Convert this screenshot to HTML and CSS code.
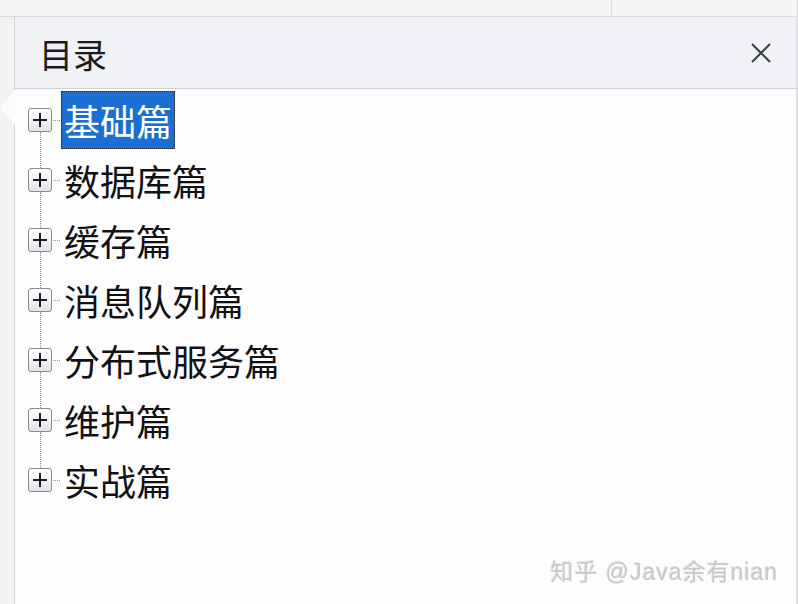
FILE: index.html
```html
<!DOCTYPE html>
<html lang="zh-CN">
<head>
<meta charset="UTF-8" />
<meta name="viewport" content="width=device-width, initial-scale=1" />
<title>目录</title>
<link rel="stylesheet" href="styles.css">
</head>
<body>

<div class="top-strip">
  <div class="top-cell"></div>
  <div class="top-cell small"></div>
</div>

<div class="main">
  <div class="gutter"></div>

  <div class="panel">
    <span class="notch"></span>

    <div class="panel-header">
      <span class="panel-title">目录</span>
      <svg class="close" width="22" height="22" viewBox="0 0 22 22">
        <path d="M2 2 L20 20 M20 2 L2 20" stroke="#3c3f45" stroke-width="2" fill="none" />
      </svg>
    </div>

    <ul class="tree">
      <li class="node"><span class="toggle"></span><span class="label selected">基础篇</span></li>
      <li class="node"><span class="toggle"></span><span class="label">数据库篇</span></li>
      <li class="node"><span class="toggle"></span><span class="label">缓存篇</span></li>
      <li class="node"><span class="toggle"></span><span class="label">消息队列篇</span></li>
      <li class="node"><span class="toggle"></span><span class="label">分布式服务篇</span></li>
      <li class="node"><span class="toggle"></span><span class="label">维护篇</span></li>
      <li class="node"><span class="toggle"></span><span class="label">实战篇</span></li>
    </ul>

    <div class="watermark">知乎 @Java余有nian</div>
  </div>
</div>

</body>
</html>
```

FILE: styles.css
```css
body {
  margin: 0;
  font-family: "Noto Sans CJK SC", "Noto Sans", sans-serif;
  background: #f3f4f6;
  width: 798px;
  height: 604px;
  overflow: hidden;
}
.top-strip {
  display: flex;
  height: 16px;
  border-bottom: 1px solid #d9dadd;
  background: #f4f5f7;
}
.top-cell {
  width: 611px;
  border-right: 1px solid #dcdde0;
}
.top-cell.small {
  flex: 1;
  border-right: 1px solid #d6d7da;
}
.main {
  display: flex;
  height: 587px;
}
.gutter {
  width: 14px;
  background: #f1f2f4;
  border-right: 1px solid #d3d4d7;
}
.panel {
  position: relative;
  flex: 1;
  background: #fdfdfe;
  border-right: 2px solid #dfe0e3;
}
.notch {
  position: absolute;
  left: -15px;
  top: 72px;
  width: 0;
  height: 0;
  border-top: 18px solid transparent;
  border-bottom: 18px solid transparent;
  border-right: 15px solid #fbfbfc;
}
.panel-header {
  display: flex;
  align-items: center;
  justify-content: space-between;
  height: 71px;
  padding: 0 24px 0 24px;
  background: #f0f2f5;
  border-bottom: 1px solid #cfd1d5;
}
.panel-title {
  font-size: 34px;
  color: #1b1b1d;
  line-height: 1;
  margin-top: 3px;
}
.close {
  display: block;
}
.tree {
  list-style: none;
  margin: 0;
  padding: 1px 0 0 13px;
}
.node {
  position: relative;
  display: flex;
  align-items: center;
  height: 60px;
}
.node::before {
  content: "";
  position: absolute;
  left: 25px;
  top: 30px;
  width: 7px;
  border-top: 1px dotted #8c9098;
}
.node::after {
  content: "";
  position: absolute;
  left: 12px;
  top: 42px;
  height: 36px;
  border-left: 1px dotted #8c9098;
}
.node:last-child::after {
  display: none;
}
.toggle {
  position: relative;
  width: 22px;
  height: 22px;
  border: 1px solid #878b93;
  border-radius: 3px;
  background: linear-gradient(#ffffff, #e3e5ea);
  margin-right: 9px;
  flex-shrink: 0;
}
.toggle::before,
.toggle::after {
  content: "";
  position: absolute;
  background: #1d1f24;
}
.toggle::before {
  left: 4px;
  top: 10px;
  width: 14px;
  height: 2px;
}
.toggle::after {
  left: 10px;
  top: 4px;
  width: 2px;
  height: 14px;
}
.label {
  font-size: 36px;
  line-height: 56px;
  padding: 0 2px;
  color: #111113;
  border: 1px dotted transparent;
}
.label.selected {
  background: #1b6fd2;
  color: #ffffff;
  border-color: #1f2630;
}
.watermark {
  position: absolute;
  right: 18px;
  bottom: 17px;
  font-family: "Liberation Sans", "Noto Sans CJK SC", sans-serif;
  font-size: 23px;
  color: #c7c8ca;
  text-shadow: 1px 1px 0 #ffffff, -1px -1px 0 #e4e5e7;
  letter-spacing: 1px;
}
```
